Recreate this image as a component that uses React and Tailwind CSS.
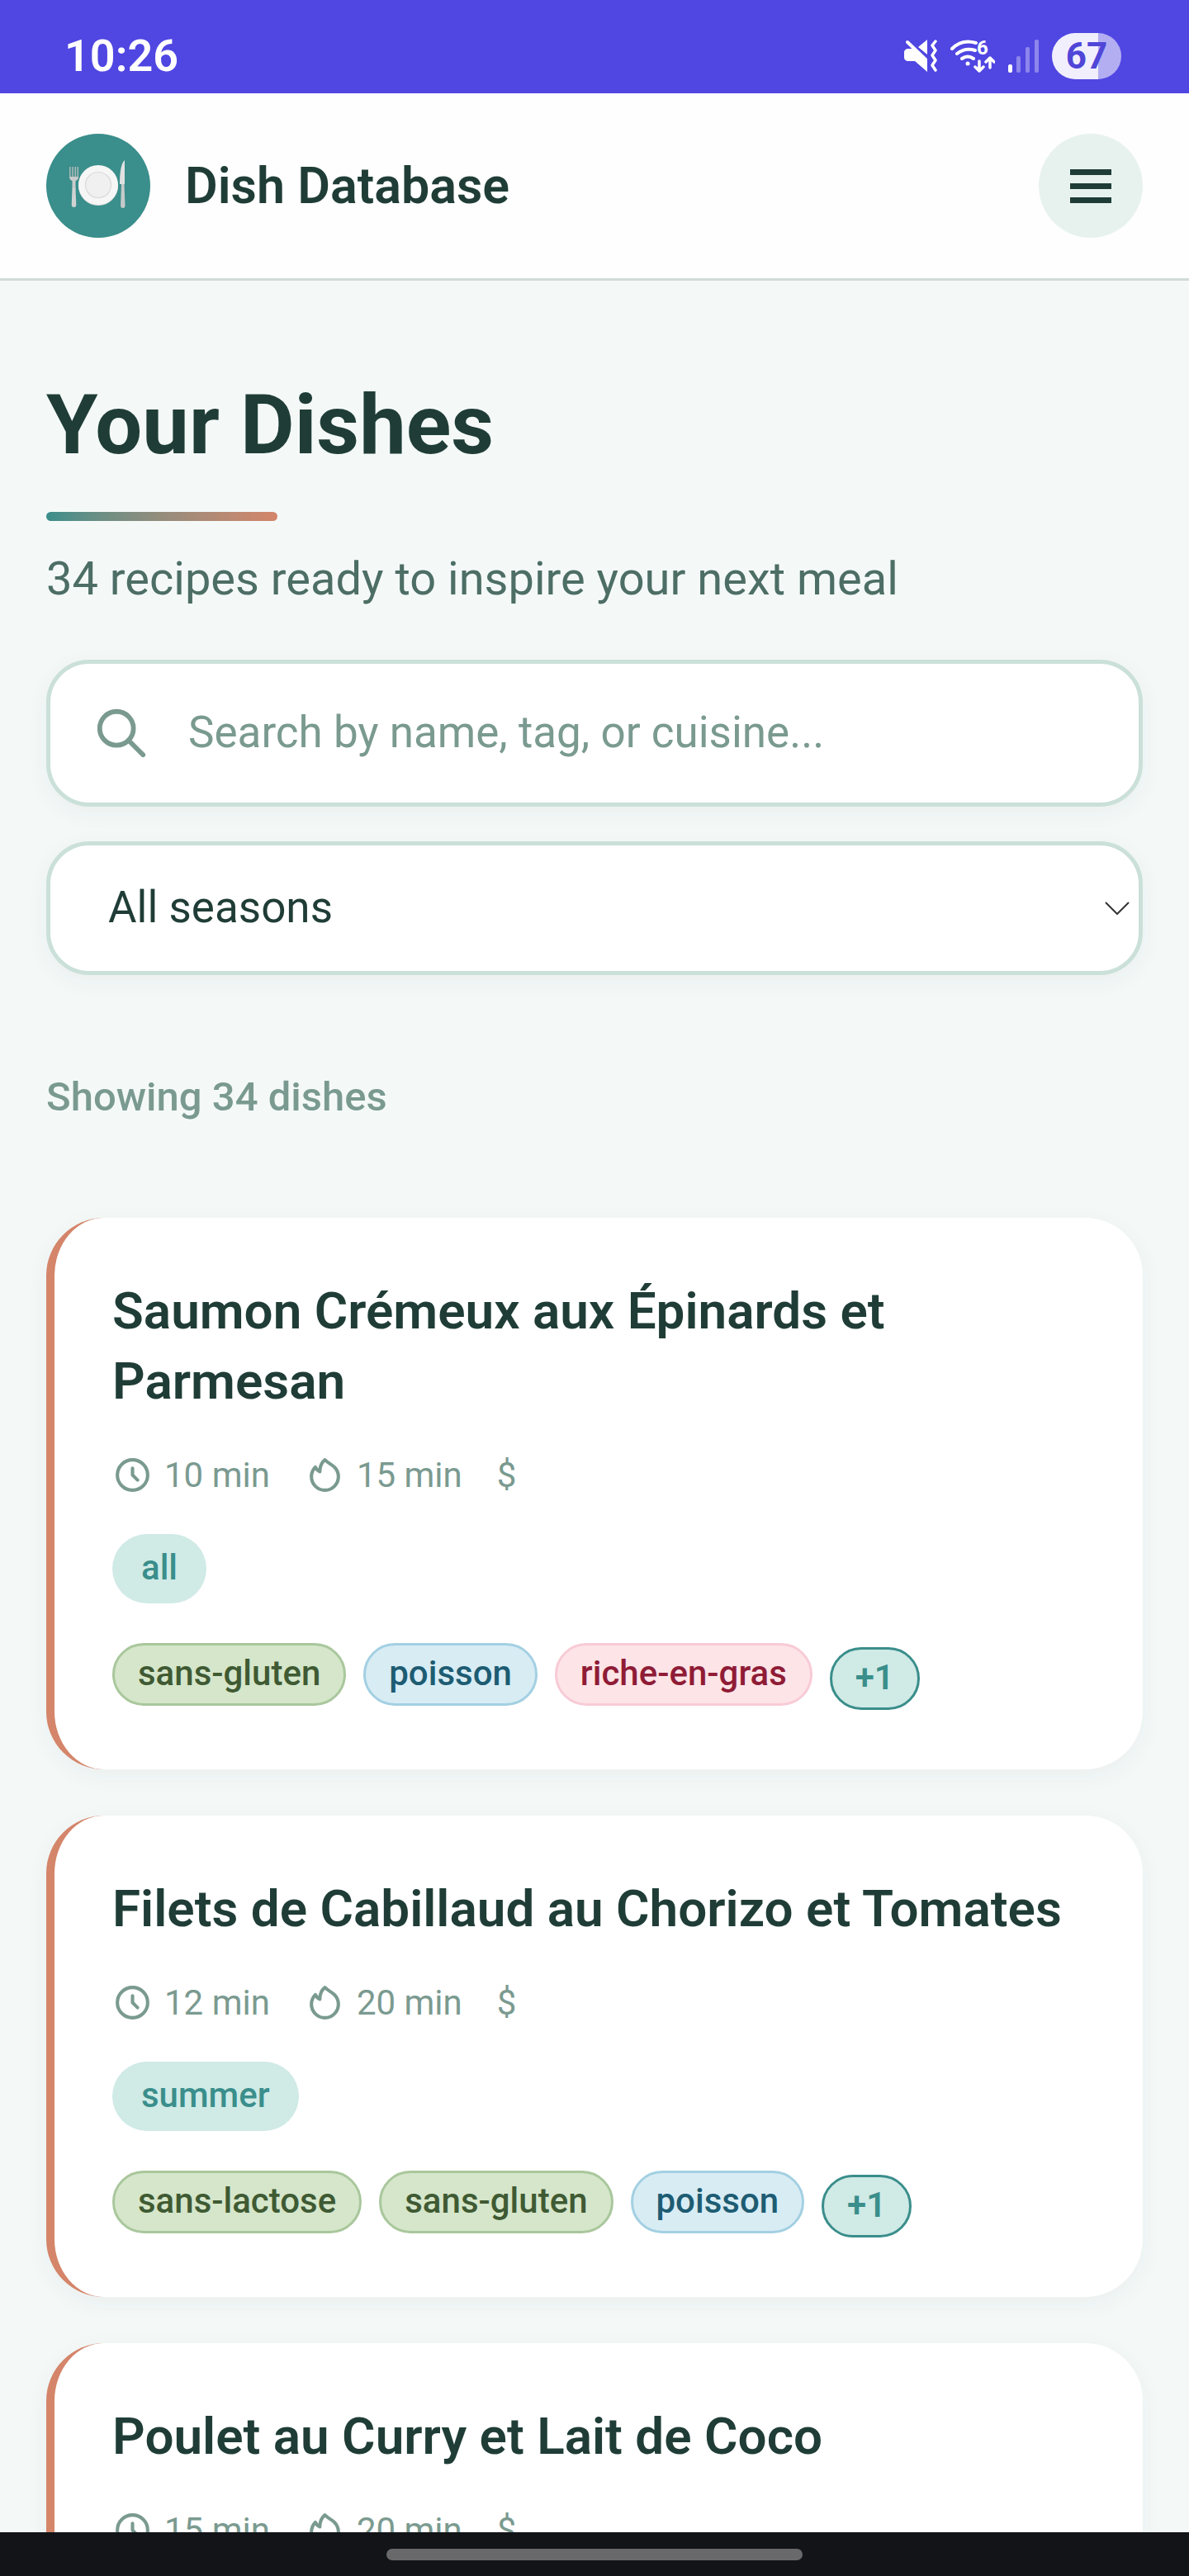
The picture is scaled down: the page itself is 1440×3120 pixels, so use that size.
import { useState } from 'react'

const DISHES = [
  {
    name: 'Saumon Crémeux aux Épinards et Parmesan',
    prep: 10,
    cook: 15,
    season: 'all',
    tags: ['sans-gluten', 'poisson', 'riche-en-gras'],
    more: 1,
  },
  {
    name: 'Filets de Cabillaud au Chorizo et Tomates',
    prep: 12,
    cook: 20,
    season: 'summer',
    tags: ['sans-lactose', 'sans-gluten', 'poisson'],
    more: 1,
  },
  {
    name: 'Poulet au Curry et Lait de Coco',
    prep: 15,
    cook: 20,
  },
]

const tagColor = {
  'sans-gluten': 'bg-[#d5e6ca] text-[#3f5a33] border-[#a9c79c]',
  'sans-lactose': 'bg-[#d5e6ca] text-[#3f5a33] border-[#a9c79c]',
  poisson: 'bg-[#d8ecf4] text-[#1d5c72] border-[#a3d0e2]',
  'riche-en-gras': 'bg-[#fde4e7] text-[#8f1c36] border-[#f8cbd6]',
}

function StatusBar() {
  return (
    <div className="flex h-[113px] shrink-0 items-center justify-between bg-[#5046e2] pl-[78px] pr-[82px] pt-[22px] text-white">
      <span className="text-[54px] font-semibold leading-none">10:26</span>
      <div className="flex items-center gap-4">
        {/* muted + vibrate */}
        <svg className="h-10 w-10" viewBox="0 0 40 40" fill="none">
          <path d="M5 11h6l17 14v14L13 26H5c-3 0-5-2-5-4v-7c0-2 2-4 5-4z" fill="currentColor" />
          <path d="M28 0v18L17 9z" fill="currentColor" />
          <path d="M4 3l22 21" stroke="currentColor" strokeWidth="4" strokeLinecap="round" />
          <path d="M38 2l-4 5 4 6-4 6 4 6-4 6 4 6" stroke="currentColor" strokeWidth="3.5" strokeLinecap="round" strokeLinejoin="round" />
        </svg>
        {/* wifi 6 */}
        <svg className="h-10 w-[54px]" viewBox="0 0 54 40" fill="none" stroke="currentColor" strokeWidth="4" strokeLinecap="round">
          <path d="M2 11Q14-1 31 4M8 17q10-8 22-4M14 23q7-5 14 0" />
          <circle cx="21" cy="29" r="2.5" fill="currentColor" stroke="none" />
          <text x="32" y="18" fontSize="24" fontWeight="700" fill="currentColor" stroke="none">6</text>
          <path d="M35 26v12m-5-5l5 5 5-5M48 34V22m-5 5l5-5 5 5" strokeWidth="3.5" strokeLinejoin="round" />
        </svg>
        {/* signal */}
        <svg className="h-10 w-[37px]" viewBox="0 0 37 40" fill="currentColor">
          <rect x="0" y="30" width="5" height="10" rx="2" />
          <rect x="10" y="20" width="5" height="20" rx="2" opacity="0.35" />
          <rect x="21" y="9" width="5" height="31" rx="2" opacity="0.35" />
          <rect x="32" y="0" width="5" height="40" rx="2" opacity="0.35" />
        </svg>
        <div className="flex h-14 w-[84px] items-center justify-center rounded-full bg-linear-to-r from-[#f1effd] from-67% to-[#b3aef2] to-67%">
          <span className="text-[44px] font-bold leading-none text-[#5046d8]">67</span>
        </div>
      </div>
    </div>
  )
}

function PlateIcon() {
  return (
    <svg className="h-[70px] w-[70px]" viewBox="0 0 70 70" fill="none">
      <circle cx="35" cy="35" r="24" fill="#dcdcdc" />
      <circle cx="35" cy="34" r="24" fill="#f6f6f6" />
      <circle cx="35" cy="34" r="15.500" fill="#f0f0f0" stroke="#dadada" strokeWidth="1.2" />
      <path d="M.8 12v12M4 12v12M7.200 12v12M10.200 12v12" stroke="#b9bebe" strokeWidth="1.400" />
      <path d="M0 24h11q0 4-3.500 5v10h-4V29Q0 28 0 24z" fill="#c9cccc" />
      <path d="M3.500 38h4l.8 20q0 3-2.800 3t-2.800-3z" fill="#d0d3d3" />
      <path d="M67 4q-6 5-6 29h6z" fill="#dfe1e1" />
      <path d="M63 33h3.500l1 26q0 3-2.700 3t-2.700-3z" fill="#c6caca" />
    </svg>
  )
}

function Header() {
  return (
    <header className="flex shrink-0 items-center justify-between border-b-[3px] border-[#d1dbd8] bg-[#fefefe] px-14 py-[49px]">
      <a href="#" className="flex items-center gap-[42px]">
        <span className="flex size-[126px] items-center justify-center rounded-full bg-[#3a8e8b]">
          <PlateIcon />
        </span>
        <span className="text-[61px] font-semibold leading-none">Dish Database</span>
      </a>
      <button aria-label="Menu" className="flex size-[126px] flex-col items-center justify-center gap-2.5 rounded-full bg-[#e7f2ef]">
        <span className="h-[7px] w-[50px] bg-[#1f3d36]" />
        <span className="h-[7px] w-[50px] bg-[#1f3d36]" />
        <span className="h-[7px] w-[50px] bg-[#1f3d36]" />
      </button>
    </header>
  )
}

function DishCard({ dish }) {
  return (
    <article className="rounded-[70px] border-l-[10px] border-[#d4856a] bg-white px-[70px] pb-18 pt-[70px] shadow-[0_7px_28px_rgba(31,61,54,0.05)]">
      <h2 className="text-[62px] font-semibold leading-[85px]">{dish.name}</h2>
      <div className="mt-10 flex items-center gap-[42px] text-[42px] leading-[63px] text-[#7a9a90]">
        <span className="flex items-center gap-3.5">
          <svg className="size-[49px]" viewBox="0 0 24 24" fill="none" stroke="currentColor" strokeWidth="2" strokeLinecap="round" strokeLinejoin="round">
            <path d="M12 8v4l3 3m6-3a9 9 0 11-18 0 9 9 0 0118 0z" />
          </svg>
          {dish.prep} min
        </span>
        <span className="flex items-center gap-3.5">
          <svg className="size-[49px]" viewBox="0 0 24 24" fill="none" stroke="currentColor" strokeWidth="2" strokeLinecap="round" strokeLinejoin="round">
            <path d="M17.657 18.657A8 8 0 016.343 7.343S7 9 9 10c0-2 .5-5 2.986-7C14 5 16.09 5.777 17.656 7.343A7.975 7.975 0 0120 13a7.975 7.975 0 01-2.343 5.657z" />
          </svg>
          {dish.cook} min
        </span>
        <span>$</span>
      </div>
      {dish.season && (
        <span className="mt-10 flex h-[84px] w-fit items-center rounded-full bg-[#d0eae6] px-[35px] pb-1 text-[42px] font-medium text-[#3a8e8b]">
          {dish.season}
        </span>
      )}
      {dish.tags && (
        <div className="mt-12 flex items-end gap-[21px]">
          <ul className="flex gap-[21px] pb-[5px]">
            {dish.tags.map(tag => (
              <li key={tag} className={`flex h-[76px] items-center rounded-full border-[3px] px-7 pb-1 text-[42px] font-medium ${tagColor[tag]}`}>
                {tag}
              </li>
            ))}
          </ul>
          <button className="flex h-[76px] items-center rounded-full border-[3px] border-[#3a8e8b] bg-[#d0eae6] px-7 pb-1 text-[42px] font-semibold text-[#3a8e8b]">
            +{dish.more}
          </button>
        </div>
      )}
    </article>
  )
}

export default function App() {
  const [query, setQuery] = useState('')
  const [season, setSeason] = useState('')

  return (
    <div className="flex h-screen flex-col overflow-hidden bg-[#f4f9f8] font-[Roboto,sans-serif] text-[#1f3d36]">
      <StatusBar />
      <Header />

      <main className="min-h-0 flex-1 overflow-hidden px-14 pt-28">
        <h1 className="text-[101px] font-bold leading-[126px]">Your Dishes</h1>
        <div className="mt-[42px] h-[11px] w-[280px] rounded-[7px] bg-linear-to-r from-[#3a8e8b] to-[#d4856a]" />
        <p className="mt-7 text-[56px] leading-[84px] text-[#4d6e65]">34 recipes ready to inspire your next meal</p>

        <label className="mt-14 flex h-[178px] items-center gap-[46px] rounded-[52px] border-[5px] border-[#cae0d9] bg-white px-[51px] shadow-[0_7px_28px_rgba(31,61,54,0.05)]">
          <svg className="size-[70px] shrink-0 text-[#7a9a90]" viewBox="0 0 24 24" fill="none" stroke="currentColor" strokeWidth="2" strokeLinecap="round" strokeLinejoin="round">
            <path d="M21 21l-6-6m2-5a7 7 0 1 1-14 0 7 7 0 0 1 14 0z" />
          </svg>
          <input
            type="text"
            aria-label="Search dishes"
            value={query}
            onChange={e => setQuery(e.target.value)}
            placeholder="Search by name, tag, or cuisine..."
            className="min-w-0 flex-1 bg-transparent text-[53px] outline-none placeholder:text-[#7a9a90]"
          />
        </label>

        <div className="relative mt-[42px]">
          <select
            aria-label="Season"
            value={season}
            onChange={e => setSeason(e.target.value)}
            className="h-[162px] w-full appearance-none rounded-[52px] border-[5px] border-[#cae0d9] bg-white px-[70px] text-[53px] shadow-[0_7px_28px_rgba(31,61,54,0.05)] outline-none"
          >
            <option value="">All seasons</option>
            <option value="spring">Spring</option>
            <option value="summer">Summer</option>
            <option value="autumn">Autumn</option>
            <option value="winter">Winter</option>
          </select>
          <svg className="pointer-events-none absolute right-4 top-1/2 h-4 w-[30px] -translate-y-1/2" viewBox="0 0 30 16" fill="none" stroke="#333" strokeWidth="2">
            <path d="M1 1l14 14L29 1" />
          </svg>
        </div>

        <p className="mt-27 text-[49px] font-medium leading-[80px] text-[#7a9a90]">Showing 34 dishes</p>

        <div className="mt-[106px] flex flex-col gap-14">
          {DISHES.map(dish => (
            <DishCard key={dish.name} dish={dish} />
          ))}
        </div>
      </main>

      {/* Gesture bar */}
      <div className="flex h-[53px] shrink-0 items-center justify-center bg-[#131418]">
        <div className="h-3.5 w-[35%] rounded-full bg-[#69696c]" />
      </div>
    </div>
  )
}
